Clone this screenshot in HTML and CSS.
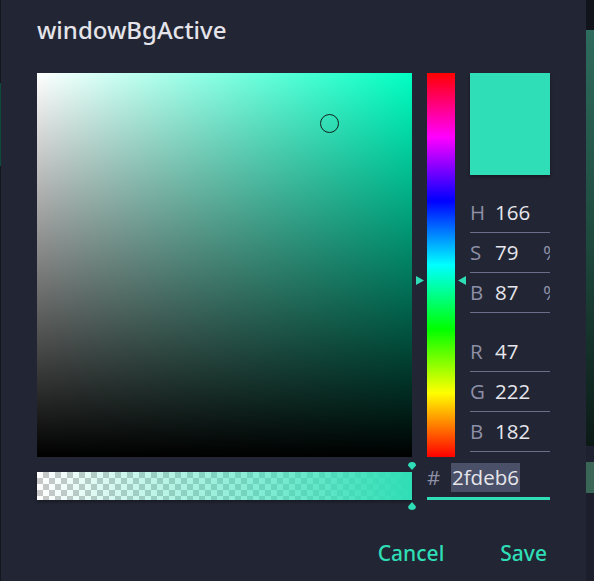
FILE: index.html
```html
<!DOCTYPE html>
<html>
<head>
<meta charset="utf-8">
<link rel="stylesheet" href="styles.css">
</head>
<body>
<div class="edge-left"><div class="edge-left-green"></div></div>
<div class="dialog">
  <h1 class="title">windowBgActive</h1>
  <div class="picker">
    <div class="sv">
      <div class="sv-white"></div>
      <div class="sv-black"></div>
      <div class="sv-cursor"></div>
    </div>
    <div class="hue">
      <span class="hue-mark hue-mark-l"></span>
      <span class="hue-mark hue-mark-r"></span>
    </div>
    <div class="side">
      <div class="swatch"></div>
      <div class="fields">
        <div class="row"><span class="lbl">H</span><span class="val">166</span></div>
        <div class="row"><span class="lbl">S</span><span class="val">79</span><span class="pct">%</span></div>
        <div class="row"><span class="lbl">B</span><span class="val">87</span><span class="pct">%</span></div>
      </div>
      <div class="fields fields-rgb">
        <div class="row"><span class="lbl">R</span><span class="val">47</span></div>
        <div class="row"><span class="lbl">G</span><span class="val">222</span></div>
        <div class="row"><span class="lbl">B</span><span class="val">182</span></div>
      </div>
    </div>
    <div class="alpha-cell">
      <div class="alpha">
        <div class="alpha-grad"></div>
        <span class="amark amark-top"></span>
        <span class="amark amark-bot"></span>
      </div>
    </div>
    <div class="hex">
      <span class="hash">#</span>
      <span class="hexval">2fdeb6</span>
    </div>
  </div>
  <div class="actions">
    <button class="btn">Cancel</button>
    <button class="btn">Save</button>
  </div>
</div>
<div class="edge-right">
  <div class="er-top"></div>
  <div class="er-green"></div>
  <div class="er-dark"></div>
  <div class="er-check"></div>
  <div class="er-bottom"></div>
</div>
</body>
</html>
```
FILE: styles.css
```css
* { box-sizing: border-box; }
html, body { margin: 0; padding: 0; }
body {
  width: 594px;
  height: 581px;
  overflow: hidden;
  display: flex;
  background: #1c1e28;
  font-family: "Open Sans", "Noto Sans", sans-serif;
}
.edge-left {
  width: 1px;
  background: #14161e;
  padding-top: 83px;
}
.edge-left-green {
  height: 83px;
  background: #0f4a3a;
}
.dialog {
  width: 585px;
  height: 581px;
  background: #222533;
  padding: 14px 36px 0 36px;
}
.title {
  margin: 0;
  font-family: "Noto Sans", "Open Sans", sans-serif;
  font-size: 24px;
  line-height: 32px;
  font-weight: 500;
  color: #e4e4ea;
}
.picker {
  margin-top: 27px;
  display: grid;
  grid-template-columns: 375px 28px 80px;
  column-gap: 15px;
}
.sv {
  position: relative;
  height: 384px;
  background: #00ffc3;
}
.sv-white {
  position: absolute;
  inset: 0;
  background: linear-gradient(to right, #fff, rgba(255,255,255,0));
}
.sv-black {
  position: absolute;
  inset: 0;
  background: linear-gradient(to top, #000, rgba(0,0,0,0));
}
.sv-cursor {
  position: absolute;
  left: 283px;
  top: 41px;
  width: 19px;
  height: 19px;
  border: 1.5px solid #10201c;
  border-radius: 50%;
}
.hue {
  position: relative;
  height: 384px;
  background: linear-gradient(to bottom, #f00 0%, #f0f 16.67%, #00f 33.33%, #0ff 50%, #0f0 66.67%, #ff0 83.33%, #f00 100%);
}
.hue-mark {
  position: absolute;
  top: 203px;
  width: 8px;
  height: 9px;
  background: #2fdeb6;
}
.hue-mark-l {
  left: -11px;
  clip-path: polygon(0 0, 100% 50%, 0 100%);
}
.hue-mark-r {
  right: -11px;
  clip-path: polygon(100% 0, 0 50%, 100% 100%);
}
.side {
  display: flex;
  flex-direction: column;
}
.swatch {
  height: 102px;
  background: #2fdeb6;
  box-shadow: 0 2px 3px rgba(0,0,0,0.35);
}
.fields {
  margin-top: 18px;
}
.fields-rgb {
  margin-top: 19px;
}
.row {
  height: 40px;
  border-bottom: 1px solid #6b6e88;
  display: flex;
  align-items: center;
  overflow: hidden;
  font-size: 20.5px;
  padding-bottom: 1px;
}
.lbl {
  width: 25px;
  color: #8d8fa6;
}
.val {
  flex: 1;
  color: #e6e6ec;
}
.pct {
  color: #8d8fa6;
  margin-right: -10px;
}
.alpha-cell {
  padding-top: 15px;
}
.alpha {
  position: relative;
  height: 28px;
  background-color: #ffffff;
  background-image:
    linear-gradient(45deg, #c8c8c8 25%, transparent 25%, transparent 75%, #c8c8c8 75%),
    linear-gradient(45deg, #c8c8c8 25%, transparent 25%, transparent 75%, #c8c8c8 75%);
  background-size: 12px 12px;
  background-position: 0 0, 6px 6px;
  box-shadow: 0 2px 3px rgba(0,0,0,0.3);
}
.alpha-grad {
  position: absolute;
  inset: 0;
  background: linear-gradient(to right, rgba(47,222,182,0), #2fdeb6);
}
.amark {
  position: absolute;
  right: -4px;
  width: 8px;
  height: 8px;
  background: #2fdeb6;
}
.amark-top {
  top: -10px;
  clip-path: polygon(0 0, 100% 0, 100% 45%, 50% 100%, 0 45%);
  border-radius: 4px 4px 0 0;
}
.amark-bot {
  bottom: -10px;
  clip-path: polygon(50% 0, 100% 55%, 100% 100%, 0 100%, 0 55%);
  border-radius: 0 0 4px 4px;
}
.hex {
  grid-column: 2 / span 2;
  height: 43px;
  border-bottom: 3px solid #2fdeb6;
  display: flex;
  align-items: center;
  font-size: 20.5px;
}
.hash {
  color: #8d8fa6;
  width: 24px;
}
.hexval {
  color: #e6e6ec;
  background: #4a5068;
  padding: 0 1px;
  line-height: 29px;
}
.actions {
  margin-top: 35px;
  display: flex;
  justify-content: flex-end;
  gap: 50px;
  padding-right: 0;
}
.btn {
  background: none;
  border: 0;
  padding: 4px 3px;
  font-family: "Noto Sans", "Open Sans", sans-serif;
  font-size: 21px;
  font-weight: 500;
  color: #2fdeb6;
  cursor: pointer;
}
.edge-right {
  width: 8px;
  display: flex;
  flex-direction: column;
}
.er-top { height: 30px; background: #12141b; }
.er-green { height: 416px; background: linear-gradient(to bottom, #2e6c5d, #1e4a3e 50%, #0c1a16); }
.er-dark { height: 16px; background: #1d2130; }
.er-check { height: 31px; background: #3a6657; }
.er-bottom { flex: 1; background: #1c1f2b; }
```
